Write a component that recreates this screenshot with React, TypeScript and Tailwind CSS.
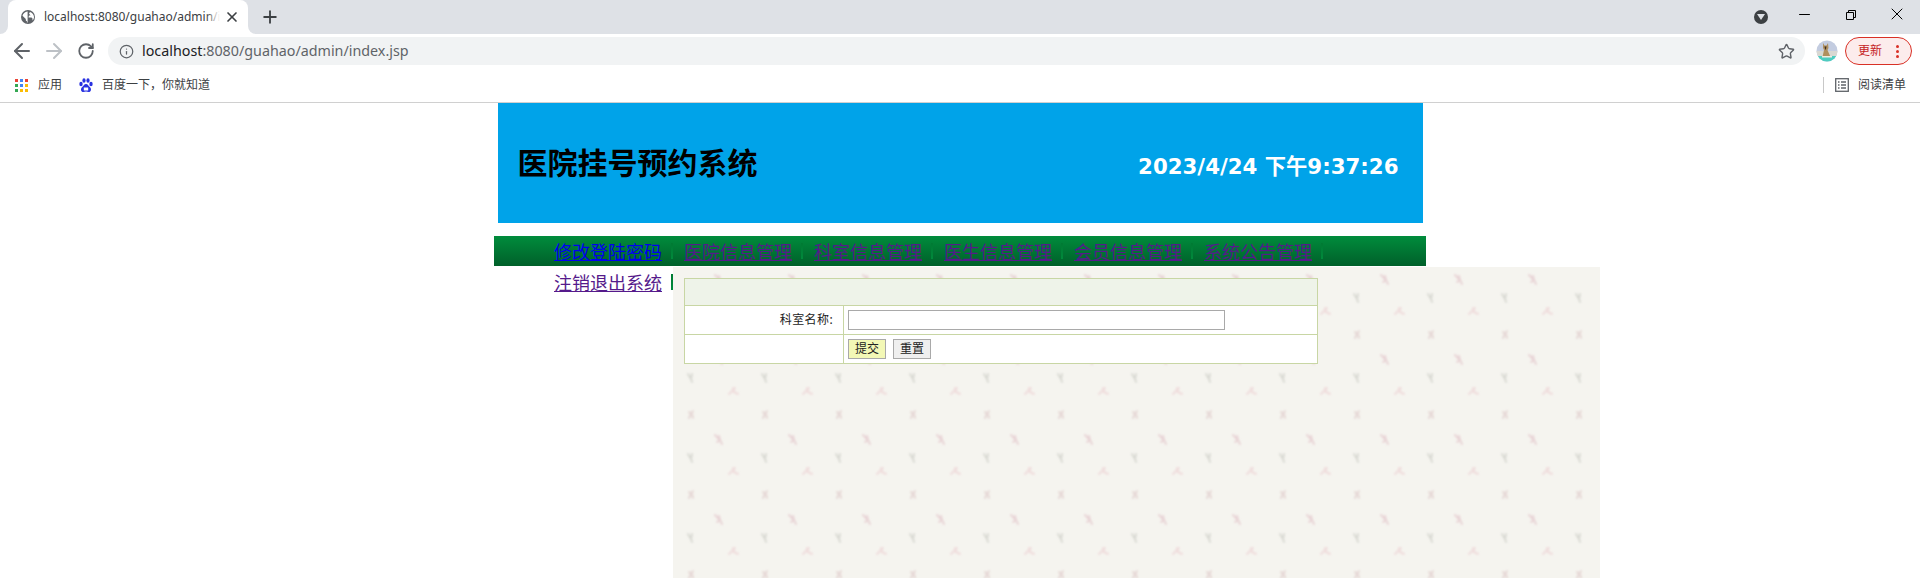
import { ArrowLeft, ArrowRight, Info, Minus, Plus, RotateCw, Star, X } from "lucide-react";

const cjk = "font-['Noto_Sans','Noto_Sans_CJK_SC',sans-serif]";

const navLinks = [
  { label: "修改登陆密码", color: "text-[#0000ee]" },
  { label: "医院信息管理", color: "text-[#551a8b]" },
  { label: "科室信息管理", color: "text-[#551a8b]" },
  { label: "医生信息管理", color: "text-[#551a8b]" },
  { label: "会员信息管理", color: "text-[#551a8b]" },
  { label: "系统公告管理", color: "text-[#551a8b]" },
  { label: "注销退出系统", color: "text-[#551a8b]" },
];

const appColors = ["#ea4335", "#4285f4", "#ea4335", "#34a853", "#4285f4", "#fbbc05", "#34a853", "#fbbc05", "#fbbc05"];

function AppsIcon() {
  return (
    <span className="grid h-[13px] w-[13px] grid-cols-3 gap-[2px]">
      {appColors.map((color, i) => (
        <svg key={i} width="3" height="3">
          <rect width="3" height="3" fill={color} />
        </svg>
      ))}
    </span>
  );
}

function GlobeIcon() {
  return (
    <svg className="shrink-0" width="14" height="14" viewBox="0 0 14 14">
      <circle cx="7" cy="7" r="7" fill="#5f6368" />
      <path d="M6.300 1.500C4 1.800 2 3.500 1.500 5.800L4.800 9v1c0 .6.500 1.100 1.100 1.100v1.300h.7V1.500zM9 2l-1 1.500 1.500 2H8L7.500 7.500h3l1 1v2c1-1 1.500-2.200 1.500-3.500 0-2.200-1.600-4.200-4-5z" fill="#fff" />
    </svg>
  );
}

function BaiduIcon() {
  return (
    <svg width="14" height="15" viewBox="0 0 14 15" fill="#2932e1">
      <ellipse cx="2" cy="6" rx="1.7" ry="2.2" />
      <ellipse cx="5" cy="2.5" rx="1.6" ry="2.2" />
      <ellipse cx="9" cy="2.5" rx="1.6" ry="2.2" />
      <ellipse cx="12" cy="6" rx="1.7" ry="2.2" />
      <path d="M7 6c-2 0-2.500 2-4 3.200C1.500 10.500 1.500 14 4.500 14c1 0 1.500-.4 2.500-.4s1.500.4 2.500.4c3 0 3-3.500 1.500-4.800C9.500 8 9 6 7 6z" />
      <rect x="4.800" y="9.500" width="4.400" height="3" fill="#fff" />
    </svg>
  );
}

function Avatar() {
  return (
    <svg width="22" height="22" viewBox="0 0 22 22">
      <clipPath id="avatar-clip">
        <circle cx="11" cy="11" r="10.500" />
      </clipPath>
      <g clipPath="url(#avatar-clip)">
        <rect width="22" height="22" fill="#c3cce0" />
        <rect y="11" width="22" height="5" fill="#d9d8d2" />
        <rect y="16" width="22" height="6" fill="#4ecdc0" />
        <path d="M7 3l1.500 2.500h2L12 3l.5 5-1 2 3 7H6.500l1.500-7-1-2z" fill="#b0905f" />
        <path d="M8.500 6.500h2l-.6 3h-.8z" fill="#3b2c22" />
        <rect x="6" y="16" width="10" height="1.500" fill="#f1ece0" />
      </g>
    </svg>
  );
}

function ReadingListIcon() {
  return (
    <svg width="14" height="14" viewBox="0 0 14 14" fill="none" stroke="#5f6368" strokeWidth="1.300">
      <rect x="0.700" y="0.700" width="12.600" height="12.600" />
      <path d="M3 4h1.500M6 4h5M3 7h1.500M6 7h5M3 10h1.500M6 10h5" />
    </svg>
  );
}

function BrowserChrome() {
  return (
    <header className={`${cjk} h-[103px] border-b border-[#d0d0d0] bg-white`}>
      <div className="flex h-[34px] items-center bg-[#dee1e6] pl-2">
        <div className="relative flex h-[34px] w-[240px] items-center rounded-t-lg bg-white pl-[13px]">
          <span className="absolute bottom-0 -left-2 h-2 w-2 bg-white">
            <span className="block h-2 w-2 rounded-br-lg bg-[#dee1e6]" />
          </span>
          <span className="absolute -right-2 bottom-0 h-2 w-2 bg-white">
            <span className="block h-2 w-2 rounded-bl-lg bg-[#dee1e6]" />
          </span>
          <GlobeIcon />
          <span className="ml-[9px] w-[176px] overflow-hidden text-[12px] whitespace-nowrap text-[#3c4043]">
            localhost:8080/guahao/admin/index.jsp
          </span>
          <X size={16} className="ml-1 shrink-0 text-[#3c4043]" strokeWidth={2.5} />
          <span className="absolute top-0 left-[198px] h-[34px] w-[14px] bg-gradient-to-r from-transparent to-white" />
        </div>
        <Plus size={20} className="ml-3 text-[#3c4043]" strokeWidth={2.2} />
        <span className="ml-auto flex h-[14px] w-[14px] items-center justify-center rounded-full bg-[#3c4043]">
          <svg width="8" height="6" viewBox="0 0 8 6">
            <path d="M0 0h8L4 6z" fill="#dee1e6" />
          </svg>
        </span>
        <Minus size={17} className="ml-[28px] -translate-y-[3px] text-black" strokeWidth={1.5} />
        <svg className="ml-[33px] -translate-y-[2px]" width="10" height="10" viewBox="0 0 10 10" fill="none" stroke="#000">
          <path d="M.5 2.500h7v7h-7zM2.500 2.500v-2h7v7h-2" />
        </svg>
        <X size={20} className="mr-[13px] ml-[31px] -translate-y-[3px] text-black" strokeWidth={1.2} />
      </div>

      <div className="flex h-[34px] items-center pl-[10px]">
        <ArrowLeft size={24} className="text-[#5f6368]" strokeWidth={2} />
        <ArrowRight size={24} className="ml-2 text-[#bdc1c6]" strokeWidth={2} />
        <RotateCw size={18} className="ml-[11px] text-[#5f6368]" strokeWidth={2.4} />
        <div className="ml-[13px] flex h-[28px] w-[1697px] items-center rounded-full bg-[#f1f3f4] pl-[11px]">
          <Info size={15} className="text-[#5f6368]" strokeWidth={2} />
          <span className="ml-2 text-[14.300px] text-[#5f6368]">
            <span className="text-[#202124]">localhost</span>:8080/guahao/admin/index.jsp
          </span>
          <Star size={17} className="mr-[10px] ml-auto text-[#5f6368]" strokeWidth={2} />
        </div>
        <span className="ml-[11px]">
          <Avatar />
        </span>
        <div className="ml-[7px] flex h-[28px] w-[67px] items-center rounded-full border border-[#d93025] bg-[#fcecec] pl-[12px]">
          <span className="text-[12px] text-[#c5221f]">更新</span>
          <span className="ml-[14px] flex flex-col gap-[2px]">
            <span className="h-[3px] w-[3px] rounded-full bg-[#d93025]" />
            <span className="h-[3px] w-[3px] rounded-full bg-[#d93025]" />
            <span className="h-[3px] w-[3px] rounded-full bg-[#d93025]" />
          </span>
        </div>
      </div>

      <div className="flex h-[34px] items-center pr-[14px] pl-[15px] text-[12px] text-[#3c4043]">
        <AppsIcon />
        <span className="ml-[10px]">应用</span>
        <span className="ml-[17px]">
          <BaiduIcon />
        </span>
        <span className="ml-[9px]">百度一下，你就知道</span>
        <span className="ml-auto h-[16px] w-px bg-[#c8c8c8]" />
        <span className="ml-[11px]">
          <ReadingListIcon />
        </span>
        <span className="ml-[9px]">阅读清单</span>
      </div>
    </header>
  );
}

function Banner() {
  return (
    <div className="mx-auto flex h-[120px] w-[925px] items-center justify-between bg-[#00a3e9] pr-[24px] pl-[20px]">
      <h1 className={`${cjk} mb-[2px] text-[30px] font-bold text-black`}>医院挂号预约系统</h1>
      <div className="mt-2 font-['DejaVu_Sans','Noto_Sans_CJK_SC',sans-serif] text-[21.300px] font-bold text-white">
        2023/4/24 下午9:37:26
      </div>
    </div>
  );
}

function NavBar() {
  return (
    <nav className={`${cjk} mx-auto mt-[13px] h-[30px] w-[932px] bg-gradient-to-b from-[#008c3c] to-[#00602a] pl-[49px]`}>
      <ul className="flex flex-wrap">
        {navLinks.map((link) => (
          <li key={link.label} className="flex h-[31px] w-[130px] items-center justify-between pl-[11px]">
            <a href="#" className={`text-[18px] leading-none underline ${link.color}`}>
              {link.label}
            </a>
            <span className="mt-[-1px] h-4 w-[2px] bg-gradient-to-b from-[#007a33] to-[#008a3c]" />
          </li>
        ))}
      </ul>
    </nav>
  );
}

function PatternBackdrop() {
  return (
    <svg className="absolute inset-0 h-full w-full" aria-hidden="true">
      <defs>
        <filter id="soft" x="-20%" y="-20%" width="140%" height="140%">
          <feGaussianBlur stdDeviation="1" />
        </filter>
        <pattern id="flowers" width="74" height="80" patternUnits="userSpaceOnUse">
          <g filter="url(#soft)" fill="none" strokeLinecap="round">
            <path d="M42 8l5 5 2 4M46 9l1 4-3 2" stroke="#e8d3d5" strokeWidth="2" />
            <path d="M15 27l3 5 1 3M19 27l-1 5" stroke="#d9d9d3" strokeWidth="2" />
            <path d="M56 47l4-4 2-2M60 41l1 4 4 2" stroke="#efdcdc" strokeWidth="2" />
            <path d="M16 71l2-4 2-3M18 67l-2-2M19 67l1 4" stroke="#e6d8d6" strokeWidth="2" />
          </g>
        </pattern>
      </defs>
      <rect width="100%" height="100%" fill="url(#flowers)" />
    </svg>
  );
}

function DepartmentForm() {
  const cell = "border border-[#c8d6a4]";
  return (
    <table className={`${cjk} relative ml-[11px] w-[634px] table-fixed border-collapse bg-white text-[12px] text-[#222]`}>
      <colgroup>
        <col className="w-[159px]" />
        <col />
      </colgroup>
      <tbody>
        <tr className="h-[27px] bg-[#eef3e9]">
          <td colSpan={2} className={cell} />
        </tr>
        <tr className="h-[29px]">
          <td className={`${cell} pr-[10px] text-right tracking-[0.4px]`}>科室名称:</td>
          <td className={`${cell} pl-1`}>
            <input className="block h-[20px] w-[377px] border border-[#a9a9a9] bg-white" />
          </td>
        </tr>
        <tr className="h-[29px]">
          <td className={cell} />
          <td className={`${cell} pl-1`}>
            <div className="flex gap-[7px]">
              <button className="h-[20px] w-[38px] border border-[#a9a9a9] bg-[#f3f8b6]">提交</button>
              <button className="h-[20px] w-[38px] border border-[#a9a9a9] bg-[#efefef]">重置</button>
            </div>
          </td>
        </tr>
      </tbody>
    </table>
  );
}

export default function App() {
  return (
    <div className="h-[578px] overflow-hidden bg-white">
      <BrowserChrome />
      <Banner />
      <NavBar />
      <main className="relative mt-px ml-[673px] h-[311px] w-[927px] bg-[#f5f4ef] pt-[11px]">
        <PatternBackdrop />
        <DepartmentForm />
      </main>
    </div>
  );
}
